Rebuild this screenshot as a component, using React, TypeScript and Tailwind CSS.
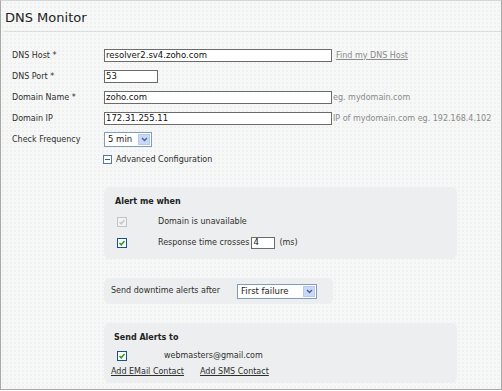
import React from "react";

const Check = ({ disabled }: { disabled?: boolean }) => (
  <span
    className={
      "flex w-[10px] h-[10px] items-center justify-center border " +
      (disabled ? "border-[#c4c4c4] bg-[#f3f3f3]" : "border-[#1c5180] bg-white")
    }
  >
    <svg width="8" height="8" viewBox="0 0 8 8">
      <polyline
        points="1.5,4 3.2,5.8 6.5,2"
        fill="none"
        stroke={disabled ? "#c8c8c8" : "#21a121"}
        strokeWidth="1.5"
      />
    </svg>
  </span>
);

const Select = ({ value, w }: { value: string; w: string }) => (
  <div className={"flex h-[15px] items-center justify-between border border-[#7f9db9] bg-white " + w}>
    <span className="pl-[3px] text-[8.5px] text-[#222]">{value}</span>
    <span className="mr-[1px] flex h-[11px] w-[12px] items-center justify-center border border-[#b8c9f0] bg-[#c9d8fa]">
      <svg width="7" height="5" viewBox="0 0 7 5">
        <polyline points="1,1 3.5,3.5 6,1" fill="none" stroke="#4d6185" strokeWidth="1.4" />
      </svg>
    </span>
  </div>
);

const Field = ({ value, w }: { value: string; w: string }) => (
  <div className={"flex h-[13px] items-center border border-[#6b6b6b] bg-white pl-[1px] text-[8.5px] text-[#111] " + w}>
    {value}
  </div>
);

const rows = [
  { label: "DNS Host *", value: "resolver2.sv4.zoho.com", w: "w-[228px]", link: "Find my DNS Host" },
  { label: "DNS Port *", value: "53", w: "w-[54px]" },
  { label: "Domain Name *", value: "zoho.com", w: "w-[228px]", hint: "eg. mydomain.com" },
  { label: "Domain IP", value: "172.31.255.11", w: "w-[228px]", hint: "IP of mydomain.com eg. 192.168.4.102" },
];

export default function App() {
  return (
    <div className="h-[390px] w-[502px] overflow-hidden border border-[#a8a8a8] border-t-[#d6d6d6] bg-[#f6f7f8] bg-[radial-gradient(circle,#eeede2_0.6px,transparent_0.9px)] bg-size-[4px_4px] font-['DejaVu_Sans',sans-serif] text-[8px] text-[#2e2e2e]">
      <div className="ml-[3px] h-[31px] border-b border-[#dcdcdc] pl-[1px] pt-[9px] text-[13px] leading-[16px] text-[#222]">
        DNS Monitor
      </div>

      <div className="pl-[11px] pt-[13px]">
        {rows.map((r) => (
          <div key={r.label} className="flex h-[21px] items-center">
            <div className="w-[92px]">{r.label}</div>
            <Field value={r.value} w={r.w} />
            {r.link && <span className="ml-[4px] text-[#8a8a8a] underline">{r.link}</span>}
            {r.hint && <span className="ml-[1px] text-[#8a8a8a]">{r.hint}</span>}
          </div>
        ))}
        <div className="flex h-[21px] items-center">
          <div className="w-[92px]">Check Frequency</div>
          <Select value="5 min" w="w-[48px]" />
        </div>
        <div className="flex h-[19px] items-center pl-[91px]">
          <span className="flex h-[9px] w-[9px] items-center justify-center border border-[#5b79a0] bg-white">
            <span className="h-[1px] w-[5px] bg-[#3b5a84]" />
          </span>
          <span className="ml-[4px]">Advanced Configuration</span>
        </div>
      </div>

      <div className="ml-[103px] mt-[18px] h-[72px] w-[353px] rounded-[6px] bg-[#eceeef] pt-[10px]">
        <div className="pl-[11px] text-[8px] font-bold leading-[10px] text-[#222]">Alert me when</div>
        <div className="mt-[4px] flex h-[21px] items-center pl-[13px]">
          <Check disabled />
          <span className="ml-[31px]">Domain is unavailable</span>
        </div>
        <div className="flex h-[21px] items-center pl-[13px]">
          <Check />
          <span className="ml-[31px]">Response time crosses</span>
          <span className="ml-[2px] flex h-[12px] w-[24px] items-center border border-[#6b6b6b] bg-white pl-[1px] text-[8.5px] text-[#111]">
            4
          </span>
          <span className="ml-[4px]">(ms)</span>
        </div>
      </div>

      <div className="ml-[103px] mt-[19px] flex h-[26px] w-[229px] items-center rounded-[6px] bg-[#eceeef] pl-[7px]">
        <span className="w-[126px]">Send downtime alerts after</span>
        <Select value="First failure" w="w-[80px]" />
      </div>

      <div className="ml-[103px] mt-[19px] h-[60px] w-[353px] rounded-[6px] bg-[#eceeef] pt-[10px]">
        <div className="pl-[10px] font-bold leading-[10px] text-[#222]">Send Alerts to</div>
        <div className="mt-[5px] flex h-[16px] items-center pl-[13px]">
          <Check />
          <span className="ml-[37px]">webmasters@gmail.com</span>
        </div>
        <div className="flex h-[16px] items-center pl-[7px]">
          <span className="underline">Add EMail Contact</span>
          <span className="ml-[16px] underline">Add SMS Contact</span>
        </div>
      </div>
    </div>
  );
}
